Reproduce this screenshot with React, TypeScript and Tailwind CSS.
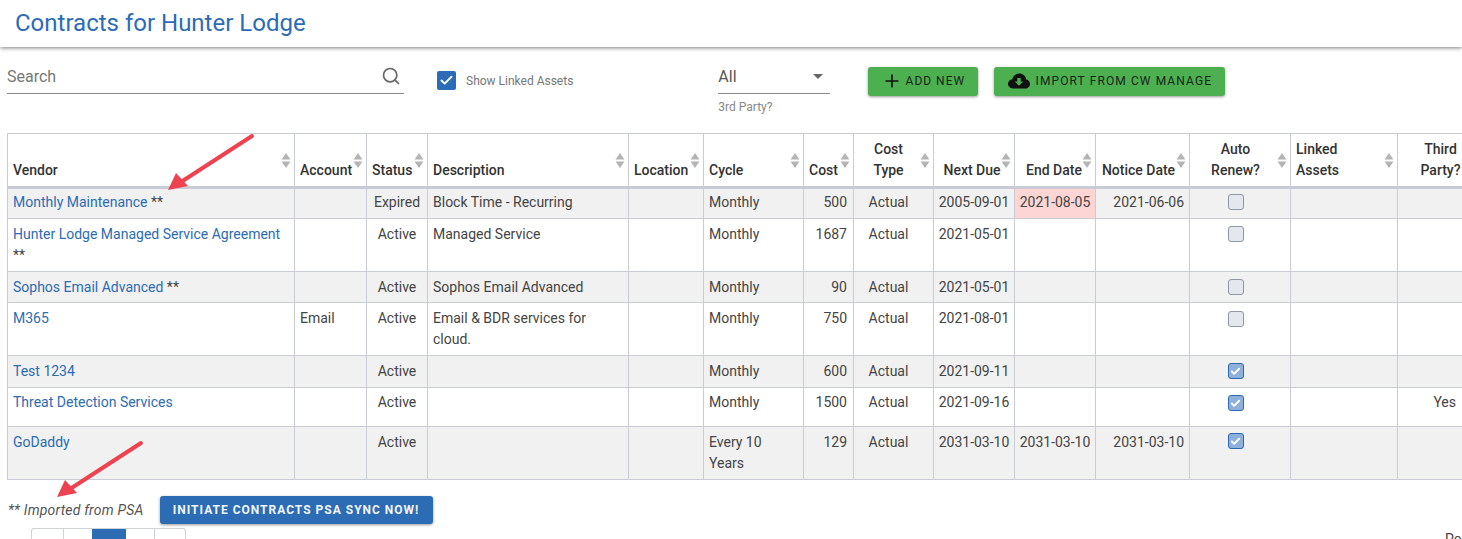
import { Check, Search, Plus } from "lucide-react";

const heads = [
  { label: ["Vendor"], col: "w-[287px]", align: "text-left pr-[5px]" },
  { label: ["Account"], col: "w-[72px]", align: "text-left pr-[5px]" },
  { label: ["Status"], col: "w-[61px]", align: "text-left pr-[5px]" },
  { label: ["Description"], col: "w-[201px]", align: "text-left pr-[5px]" },
  { label: ["Location"], col: "w-[75px]", align: "text-left pr-[5px]" },
  { label: ["Cycle"], col: "w-[100px]", align: "text-left pr-[5px]" },
  { label: ["Cost"], col: "w-[50px]", align: "text-left pr-[5px]" },
  { label: ["Cost", "Type"], col: "w-[80px]", align: "text-center pr-[15px]" },
  { label: ["Next Due"], col: "w-[81px]", align: "text-center pr-[9px]" },
  { label: ["End Date"], col: "w-[81px]", align: "text-center pr-[7px]" },
  { label: ["Notice Date"], col: "w-[94px]", align: "text-center pr-[13px]" },
  { label: ["Auto", "Renew?"], col: "w-[101px]", align: "text-center pr-[14px]" },
  { label: ["Linked", "Assets"], col: "w-[107px]", align: "text-left pr-[5px]" },
  { label: ["Third", "Party?"], col: "w-[96px]", align: "text-center pr-[15px]" },
];

const rows = [
  { vendor: "Monthly Maintenance", stars: true, account: "", status: "Expired", desc: "Block Time - Recurring", cycle: "Monthly", cost: "500", next: "2005-09-01", end: "2021-08-05", notice: "2021-06-06", auto: false, third: "", h: "h-[31px] [&>td]:pt-[3px]", box: "!pt-[5px]", expired: true },
  { vendor: "Hunter Lodge Managed Service Agreement", stars: true, account: "", status: "Active", desc: "Managed Service", cycle: "Monthly", cost: "1687", next: "2021-05-01", end: "", notice: "", auto: false, third: "", h: "h-[53px] [&>td]:pt-[5px]", box: "!pt-[7px]" },
  { vendor: "Sophos Email Advanced", stars: true, account: "", status: "Active", desc: "Sophos Email Advanced", cycle: "Monthly", cost: "90", next: "2021-05-01", end: "", notice: "", auto: false, third: "", h: "h-[31px] [&>td]:pt-[5px]", box: "!pt-[7px]" },
  { vendor: "M365", stars: false, account: "Email", status: "Active", desc: "Email & BDR services for cloud.", cycle: "Monthly", cost: "750", next: "2021-08-01", end: "", notice: "", auto: false, third: "", h: "h-[53px] [&>td]:pt-[5px]", box: "!pt-[8px]" },
  { vendor: "Test 1234", stars: false, account: "", status: "Active", desc: "", cycle: "Monthly", cost: "600", next: "2021-09-11", end: "", notice: "", auto: true, third: "", h: "h-[32px] [&>td]:pt-[5px]", box: "!pt-[7px]" },
  { vendor: "Threat Detection Services", stars: false, account: "", status: "Active", desc: "", cycle: "Monthly", cost: "1500", next: "2021-09-16", end: "", notice: "", auto: true, third: "Yes", h: "h-[39px] [&>td]:pt-[4px]", box: "!pt-[7px]" },
  { vendor: "GoDaddy", stars: false, account: "", status: "Active", desc: "", cycle: "Every 10 Years", cost: "129", next: "2031-03-10", end: "2031-03-10", notice: "2031-03-10", auto: true, third: "", h: "h-[53px] [&>td]:pt-[5px]", box: "!pt-[6px]" },
];

function SortIcon() {
  return (
    <svg width="10" height="15" viewBox="0 0 10 15" className="absolute right-[3px] top-[19px]">
      <path d="M5 0L9.5 6.5H0.5Z" fill="#b4b4b4" />
      <path d="M5 15L9.5 8.5H0.5Z" fill="#b4b4b4" />
    </svg>
  );
}

// red annotation arrows over the table
function Arrow({ className }: { className: string }) {
  return (
    <svg width="90" height="60" viewBox="0 0 90 60" className={className}>
      <line x1="85" y1="3" x2="14" y2="49" stroke="#ef4250" strokeWidth="4" strokeLinecap="round" />
      <path d="M1 57L9 40L21 53Z" fill="#ef4250" />
    </svg>
  );
}

function AutoBox({ on }: { on: boolean }) {
  if (on) {
    return (
      <div className="mx-auto flex h-4 w-4 items-center justify-center rounded-[3px] border border-[#2b6ab3] bg-[#8fb0da]">
        <Check size={11} strokeWidth={4} color="#ffffff" />
      </div>
    );
  }
  return <div className="mx-auto h-4 w-4 rounded-[3px] border border-[#8d97a5] bg-[#e4e7eb]" />;
}

export default function App() {
  return (
    <div className="h-[539px] w-[1462px] overflow-hidden bg-white font-[family-name:Roboto,sans-serif] text-sm text-[#444]">
      <header className="h-[47px] pl-[15px] pt-[7px] shadow-[0_1px_4px_rgba(0,0,0,0.5)]">
        <h1 className="text-2xl leading-[32px] text-[#2b6cb5]">Contracts for Hunter Lodge</h1>
      </header>

      <div className="flex h-[86px] items-start pl-[7px]">
        <div className="mt-[18px] flex h-[29px] w-[397px] items-start justify-between border-b border-[#8a8a8a]">
          <span className="text-base leading-[24px] text-[#777]">Search</span>
          <Search size={20} strokeWidth={2} color="#666" className="mr-[3px] mt-[1px]" />
        </div>
        <div className="ml-[33px] mt-[24px] flex items-center">
          <div className="flex h-[19px] w-[19px] items-center justify-center rounded-[2px] bg-[#2b6cb5]">
            <Check size={15} strokeWidth={3} color="#ffffff" />
          </div>
          <span className="ml-[10px] text-xs text-[#777]">Show Linked Assets</span>
        </div>
        <div className="ml-[145px] mt-[18px] w-[112px]">
          <div className="flex h-[29px] items-start justify-between border-b border-[#8a8a8a]">
            <span className="text-base leading-[24px] text-[#555]">All</span>
            <span className="mr-[7px] mt-[9px] h-0 w-0 border-x-[5px] border-t-[5px] border-x-transparent border-t-[#666]" />
          </div>
          <div className="mt-[5px] text-xs text-[#888]">3rd Party?</div>
        </div>
        <button className="ml-[38px] mt-[20px] flex h-[29px] w-[110px] items-center justify-center rounded-[3px] bg-[#4caf50] pb-[1px] text-xs tracking-[1px] text-[#1a261a] shadow-[0_1px_3px_rgba(0,0,0,0.4)]">
          <Plus size={20} strokeWidth={2} color="#111" className="mr-[4px]" />
          ADD NEW
        </button>
        <button className="ml-[16px] mt-[20px] flex h-[29px] w-[231px] items-center justify-center rounded-[3px] bg-[#4caf50] pb-[1px] text-xs tracking-[1.1px] text-[#1a261a] shadow-[0_1px_3px_rgba(0,0,0,0.4)]">
          <svg width="22" height="16" viewBox="0 0 22 16" className="mr-[6px]">
            <path d="M5 15.5C2.2 15.5 0 13.4 0 10.8C0 8.4 1.9 6.4 4.3 6.2C5.2 2.8 8 0.5 11.3 0.5C14.9 0.5 17.8 3.1 18.3 6.4C20.4 6.9 22 8.7 22 10.9C22 13.5 19.9 15.5 17.3 15.5Z" fill="#111" />
            <path d="M9.3 5H12.7V8.5H15.3L11 12.8L6.7 8.5H9.3Z" fill="#4caf50" />
          </svg>
          IMPORT FROM CW MANAGE
        </button>
      </div>

      <div className="relative ml-[7px]">
        <table className="w-[1486px] table-fixed border-collapse border-t border-[#c9ccd4]">
          <thead>
            <tr className="h-[54px] border-b-[3px] border-[#c9ccd4]">
              {heads.map((h) => (
                <th key={h.label.join(" ")} className={`relative border border-[#c9ccd4] pl-[5px] pb-[5px] align-bottom font-medium leading-[21px] text-[#333] ${h.col} ${h.align}`}>
                  {h.label.map((l) => (
                    <div key={l} className="whitespace-nowrap">{l}</div>
                  ))}
                  <SortIcon />
                </th>
              ))}
            </tr>
          </thead>
          <tbody>
            {rows.map((r, i) => (
              <tr key={r.vendor} className={`${r.h} ${i % 2 === 0 ? "bg-[#f1f1f1]" : "bg-white"}`}>
                <td className="border border-[#c9ccd4] px-[5px] align-top leading-[21px]">
                  <span className="text-[#2b6cb5]">{r.vendor}</span>
                  {r.stars ? " **" : ""}
                </td>
                <td className="border border-[#c9ccd4] px-[5px] align-top leading-[21px]">{r.account}</td>
                <td className="border border-[#c9ccd4] px-[5px] text-center align-top leading-[21px]">{r.status}</td>
                <td className="border border-[#c9ccd4] px-[5px] align-top leading-[21px]">{r.desc}</td>
                <td className="border border-[#c9ccd4] px-[5px] align-top leading-[21px]"></td>
                <td className="border border-[#c9ccd4] px-[5px] align-top leading-[21px]">{r.cycle}</td>
                <td className="border border-[#c9ccd4] px-[6px] text-right align-top leading-[21px]">{r.cost}</td>
                <td className="border border-[#c9ccd4] pl-[5px] pr-[15px] text-center align-top leading-[21px]">Actual</td>
                <td className="whitespace-nowrap border border-[#c9ccd4] px-[2px] text-center align-top leading-[21px]">{r.next}</td>
                <td className={`whitespace-nowrap border border-[#c9ccd4] px-[2px] text-center align-top leading-[21px] ${r.expired ? "bg-[#fdd5d5]" : ""}`}>{r.end}</td>
                <td className="whitespace-nowrap border border-[#c9ccd4] px-[5px] text-right align-top leading-[21px]">{r.notice}</td>
                <td className={`border border-[#c9ccd4] pl-[5px] pr-[14px] align-top ${r.box}`}><AutoBox on={r.auto} /></td>
                <td className="border border-[#c9ccd4]"></td>
                <td className="border border-[#c9ccd4] pr-[37px] text-right align-top leading-[21px]">{r.third}</td>
              </tr>
            ))}
          </tbody>
        </table>
        <Arrow className="absolute left-[160px] top-[0px]" />
        <Arrow className="absolute left-[49px] top-[307px]" />
      </div>

      <div className="ml-[8px] mt-[15px] flex items-center">
        <span className="italic tracking-[0.2px] text-[#555]">** Imported from PSA</span>
        <button className="ml-[16px] mt-[1px] h-[28px] w-[273px] rounded-[3px] bg-[#2b6cb5] text-xs font-bold tracking-[1px] text-[#f2f5fa] shadow-[0_1px_3px_rgba(0,0,0,0.4)]">
          INITIATE CONTRACTS PSA SYNC NOW!
        </button>
      </div>

      <div className="ml-[31px] mt-[4px] flex h-[24px] items-start">
        <div className="flex h-[24px] rounded-t-[3px] border border-b-0 border-[#cfd3d9]">
          <div className="w-[32px] border-r border-[#cfd3d9]" />
          <div className="w-[28px]" />
          <div className="w-[34px] bg-[#2b6cb5]" />
          <div className="w-[29px] border-r border-[#cfd3d9]" />
          <div className="w-[30px]" />
        </div>
        <span className="ml-[1259px] mt-[1px] text-sm text-[#444]">Po</span>
      </div>
    </div>
  );
}
